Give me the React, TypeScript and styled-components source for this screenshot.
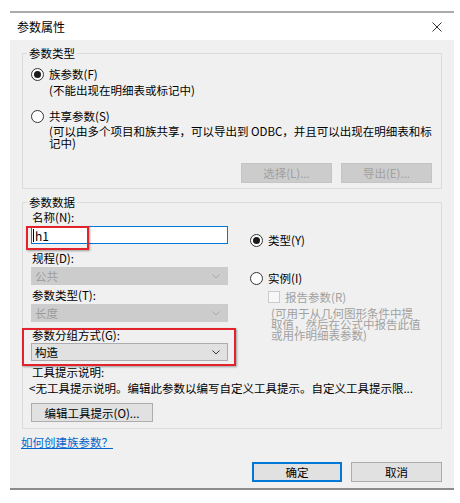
import React from "react";
import styled, { createGlobalStyle, css } from "styled-components";

const GlobalStyle = createGlobalStyle`
  html, body { margin: 0; padding: 0; background: #ffffff; }
  body {
    font-family: "Noto Sans CJK SC", "Noto Sans", sans-serif;
    font-size: 11.5px;
    color: #000000;
  }
  * { box-sizing: border-box; }
`;

const Dialog = styled.div`
  margin: 11px 0 0 10px;
  width: 444px;
  height: 479px;
  border-top: 2px solid #ababab;
  border-bottom: 2px solid #8c8c8c;
  display: flex;
  flex-direction: column;
`;

const TitleBar = styled.div`
  height: 27px;
  background: #ffffff;
  display: flex;
  align-items: center;
  justify-content: space-between;
  padding: 0 12px 0 7px;
  font-size: 12px;
  line-height: 12px;
`;

const Body = styled.div`
  flex: 1;
  background: #f0f0f0;
  padding: 7px 12px 0 12px;
  display: flex;
  flex-direction: column;
`;

const Group = styled.fieldset<{ $top?: number }>`
  margin: ${(p) => p.$top ?? 0}px 0 0 0;
  padding: 0;
  border: 1px solid #dcdcdc;
  min-width: 0;
`;

const Legend = styled.legend`
  margin-left: 4px;
  padding: 0 2px;
  line-height: 12px;
  font-size: 11.5px;
`;

const GroupInner = styled.div<{ $pt: number; $pr: number; $pb: number }>`
  padding: ${(p) => p.$pt}px ${(p) => p.$pr}px ${(p) => p.$pb}px 8px;
  display: flex;
  flex-direction: column;
`;

const RadioRow = styled.div<{ $mt?: number; $ml?: number; $disabled?: boolean }>`
  display: flex;
  align-items: center;
  gap: 5px;
  height: 14px;
  margin-top: ${(p) => p.$mt ?? 0}px;
  margin-left: ${(p) => p.$ml ?? 0}px;
  line-height: 14px;
  color: ${(p) => (p.$disabled ? "#a0a0a0" : "#000")};
`;

const RadioCircle = styled.span<{ $checked?: boolean }>`
  width: 13px;
  height: 13px;
  border-radius: 50%;
  border: 1px solid #333333;
  background: #ffffff;
  display: inline-flex;
  align-items: center;
  justify-content: center;
  flex: none;
  &::after {
    content: "";
    width: 7px;
    height: 7px;
    border-radius: 50%;
    background: #1a1a1a;
    display: ${(p) => (p.$checked ? "block" : "none")};
  }
`;

const CheckBox = styled.span`
  width: 12px;
  height: 12px;
  border: 1px solid #cccccc;
  background: #f7f7f7;
  flex: none;
`;

const Desc = styled.div<{ $mt?: number; $indent?: number; $gray?: boolean; $lh?: number }>`
  margin-top: ${(p) => p.$mt ?? 0}px;
  margin-left: ${(p) => p.$indent ?? 0}px;
  line-height: ${(p) => p.$lh ?? 12}px;
  color: ${(p) => (p.$gray ? "#a0a0a0" : "#000")};
  white-space: nowrap;
`;

const ButtonRow = styled.div<{ $mt?: number; $start?: boolean }>`
  display: flex;
  justify-content: ${(p) => (p.$start ? "flex-start" : "flex-end")};
  gap: 9px;
  margin-top: ${(p) => p.$mt ?? 0}px;
`;

const Button = styled.button<{ $w: number; $h?: number; $primary?: boolean }>`
  width: ${(p) => p.$w}px;
  height: ${(p) => p.$h ?? 20}px;
  font-family: inherit;
  font-size: 11.5px;
  line-height: 12px;
  padding: 0;
  background: #e1e1e1;
  border: 1px solid #adadad;
  color: #000;
  ${(p) =>
    p.$primary &&
    css`
      border: 1px solid #0078d7;
      box-shadow: inset 0 0 0 1px #0078d7;
    `}
  &:disabled {
    background: #cccccc;
    border-color: #c4c4c4;
    color: #a0a0a0;
  }
`;

const Columns = styled.div`
  display: flex;
  gap: 22px;
`;

const LeftCol = styled.div`
  position: relative;
  width: 197px;
  display: flex;
  flex-direction: column;
`;

const RightCol = styled.div`
  display: flex;
  flex-direction: column;
  padding-top: 22px;
`;

const Label = styled.div<{ $mt?: number }>`
  margin-top: ${(p) => p.$mt ?? 0}px;
  line-height: 12px;
  padding-left: 1px;
  white-space: nowrap;
`;

const TextInput = styled.div<{ $mt?: number }>`
  margin-top: ${(p) => p.$mt ?? 0}px;
  height: 18px;
  background: #ffffff;
  border: 1px solid #0078d7;
  display: flex;
  align-items: center;
  padding-left: 1px;
  font-size: 12px;
`;

const Caret = styled.span`
  width: 1px;
  height: 13px;
  background: #000;
  margin-right: 1px;
`;

const Select = styled.div<{ $mt?: number; $disabled?: boolean }>`
  margin-top: ${(p) => p.$mt ?? 0}px;
  height: 18px;
  display: flex;
  align-items: center;
  justify-content: space-between;
  padding: 0 7px 0 3px;
  background: ${(p) => (p.$disabled ? "#cccccc" : "#e1e1e1")};
  border: 1px solid ${(p) => (p.$disabled ? "#cccccc" : "#adadad")};
  color: ${(p) => (p.$disabled ? "#9c9c9c" : "#000")};
  line-height: 12px;
`;

const Highlight = styled.div<{ $l: number; $t: number; $w: number; $h: number }>`
  position: absolute;
  left: ${(p) => p.$l}px;
  top: ${(p) => p.$t}px;
  width: ${(p) => p.$w}px;
  height: ${(p) => p.$h}px;
  border: 2px solid #e3232b;
  box-shadow: 1px 1px 2px rgba(0, 0, 0, 0.35);
  pointer-events: none;
`;

const Tooltip = styled.div`
  margin-top: 4px;
  margin-left: -2px;
  line-height: 12px;
  white-space: nowrap;
`;

const Link = styled.a`
  margin-top: 7px;
  margin-left: -1px;
  line-height: 12px;
  color: #0066cc;
  text-decoration: underline;
  align-self: flex-start;
`;

const Footer = styled.div`
  display: flex;
  justify-content: flex-end;
  gap: 9px;
  margin-top: 14px;
`;

const Chevron = ({ color }: { color: string }) => (
  <svg width="8" height="5" viewBox="0 0 8 5">
    <path d="M0.5 0.5 L4 4 L7.5 0.5" fill="none" stroke={color} strokeWidth="1" />
  </svg>
);

const CloseIcon = () => (
  <svg width="10" height="10" viewBox="0 0 10 10">
    <path d="M0.5 0.5 L9.5 9.5 M9.5 0.5 L0.5 9.5" stroke="#333" strokeWidth="1" fill="none" />
  </svg>
);

export default function App() {
  return (
    <>
      <GlobalStyle />
      <Dialog>
        <TitleBar>
          <span>参数属性</span>
          <CloseIcon />
        </TitleBar>
        <Body>
          <Group>
            <Legend>参数类型</Legend>
            <GroupInner $pt={8} $pr={9} $pb={5}>
              <RadioRow>
                <RadioCircle $checked />
                <span>族参数(F)</span>
              </RadioRow>
              <Desc $mt={3} $indent={18}>(不能出现在明细表或标记中)</Desc>
              <RadioRow $mt={13}>
                <RadioCircle />
                <span>共享参数(S)</span>
              </RadioRow>
              <Desc $mt={2} $indent={18}>
                (可以由多个项目和族共享，可以导出到 ODBC，并且可以出现在明细表和标
              </Desc>
              <Desc $indent={18}>记中)</Desc>
              <ButtonRow $mt={14}>
                <Button $w={91} disabled>选择(L)...</Button>
                <Button $w={91} disabled>导出(E)...</Button>
              </ButtonRow>
            </GroupInner>
          </Group>

          <Group $top={7}>
            <Legend>参数数据</Legend>
            <GroupInner $pt={3} $pr={9} $pb={6}>
              <Columns>
                <LeftCol>
                  <Label>名称(N):</Label>
                  <TextInput $mt={3}>
                    <Caret />
                    h1
                  </TextInput>
                  <Label $mt={8}>规程(D):</Label>
                  <Select $mt={3} $disabled>
                    <span>公共</span>
                    <Chevron color="#a8a8a8" />
                  </Select>
                  <Label $mt={4}>参数类型(T):</Label>
                  <Select $mt={3} $disabled>
                    <span>长度</span>
                    <Chevron color="#a8a8a8" />
                  </Select>
                  <Label $mt={7}>参数分组方式(G):</Label>
                  <Select $mt={2}>
                    <span>构造</span>
                    <Chevron color="#333333" />
                  </Select>
                  <Highlight $l={-5} $t={15} $w={63} $h={24} />
                  <Highlight $l={-9} $t={117} $w={214} $h={38} />
                </LeftCol>
                <RightCol>
                  <RadioRow>
                    <RadioCircle $checked />
                    <span>类型(Y)</span>
                  </RadioRow>
                  <RadioRow $mt={24}>
                    <RadioCircle />
                    <span>实例(I)</span>
                  </RadioRow>
                  <RadioRow $mt={5} $ml={18} $disabled>
                    <CheckBox />
                    <span>报告参数(R)</span>
                  </RadioRow>
                  <Desc $mt={4} $indent={21} $gray $lh={11}>(可用于从几何图形条件中提</Desc>
                  <Desc $indent={21} $gray $lh={11}>取值，然后在公式中报告此值</Desc>
                  <Desc $indent={21} $gray $lh={11}>或用作明细表参数)</Desc>
                </RightCol>
              </Columns>
              <Label $mt={5}>工具提示说明:</Label>
              <Tooltip>&lt;无工具提示说明。编辑此参数以编写自定义工具提示。自定义工具提示限...</Tooltip>
              <ButtonRow $mt={9} $start>
                <Button $w={122} $h={19}>编辑工具提示(O)...</Button>
              </ButtonRow>
            </GroupInner>
          </Group>

          <Link href="#">如何创建族参数？</Link>
          <Footer>
            <Button $w={90} $primary>确定</Button>
            <Button $w={91}>取消</Button>
          </Footer>
        </Body>
      </Dialog>
    </>
  );
}
